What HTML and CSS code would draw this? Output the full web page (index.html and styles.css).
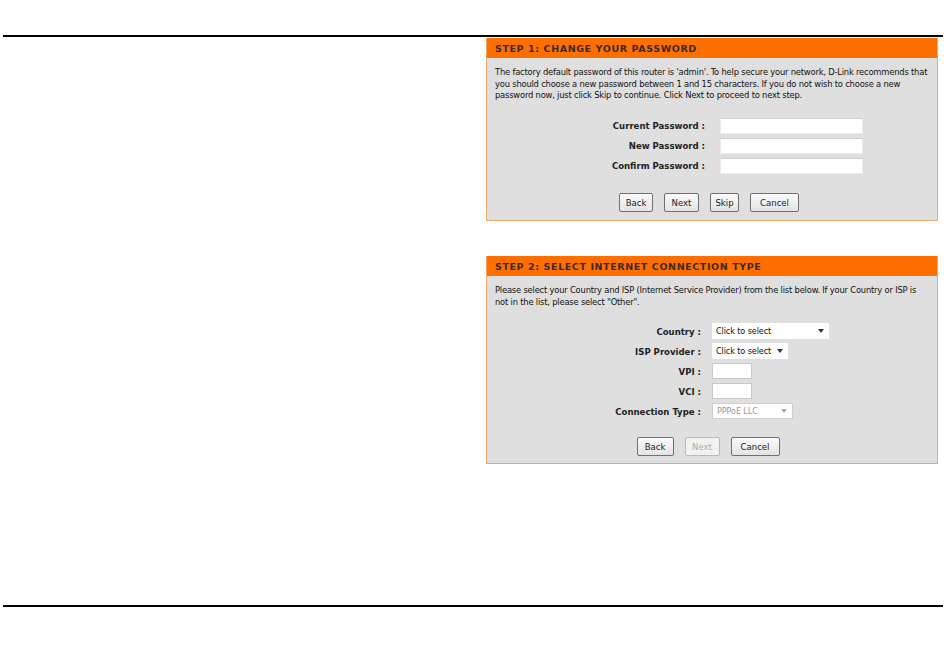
FILE: index.html
```html
<!DOCTYPE html>
<html lang="en">
<head>
  <meta charset="UTF-8">
  <title>Setup Wizard</title>
  <link rel="stylesheet" href="styles.css">
</head>
<body>

<div class="rule top-rule"></div>

<div class="content">
  <div class="panel step1">
    <div class="panel-title">STEP 1: CHANGE YOUR PASSWORD</div>
    <p class="intro">The factory default password of this router is 'admin'. To help secure your network, D-Link recommends that you should choose a new password between 1 and 15 characters. If you do not wish to choose a new password now, just click Skip to continue. Click Next to proceed to next step.</p>

    <div class="form pw-form">
      <label>Current Password :</label>
      <input type="password" class="text-box wide">
      <label>New Password :</label>
      <input type="password" class="text-box wide">
      <label>Confirm Password :</label>
      <input type="password" class="text-box wide">
    </div>

    <div class="buttons">
      <button class="btn w-back">Back</button>
      <button class="btn w-next">Next</button>
      <button class="btn w-skip">Skip</button>
      <button class="btn w-cancel">Cancel</button>
    </div>
  </div>

  <div class="panel step2">
    <div class="panel-title">STEP 2: SELECT INTERNET CONNECTION TYPE</div>
    <p class="intro">Please select your Country and ISP (Internet Service Provider) from the list below. If your Country or ISP is not in the list, please select "Other".</p>

    <div class="form isp-form">
      <label>Country :</label>
      <div class="select country"><span>Click to select</span><i class="arrow"></i></div>
      <label>ISP Provider :</label>
      <div class="select isp"><span>Click to select</span><i class="arrow"></i></div>
      <label>VPI :</label>
      <input type="text" class="text-box small">
      <label>VCI :</label>
      <input type="text" class="text-box small">
      <label>Connection Type :</label>
      <div class="select conn disabled"><span>PPPoE LLC</span><i class="arrow"></i></div>
    </div>

    <div class="buttons">
      <button class="btn w-back2">Back</button>
      <button class="btn w-next" disabled>Next</button>
      <button class="btn w-cancel">Cancel</button>
    </div>
  </div>
</div>

<div class="rule bottom-rule"></div>

</body>
</html>
```

FILE: styles.css
```css
body {
  margin: 0;
  padding: 0;
  background-color: #fff;
  font-family: 'DejaVu Sans', sans-serif;
  color: #000;
}
.rule {
  height: 2px;
  background-color: #000;
  margin: 0 7px 0 3px;
}
.top-rule {
  margin-top: 35px;
}
.bottom-rule {
  margin-top: 141px;
}
.content {
  padding-left: 486px;
  padding-top: 1px;
}
.panel {
  width: 450px;
  background-color: #dfdfdf;
  border: 1px solid #f0a868;
  border-top: none;
}
.step1 {
  height: 182px;
}
.step2 {
  height: 207px;
  margin-top: 35px;
}
.panel-title {
  height: 20px;
  line-height: 21px;
  background-color: #ff6f00;
  padding-left: 8px;
  font-size: 9.5px;
  font-weight: bold;
  letter-spacing: 0.6px;
  color: #3a2a20;
}
.intro {
  margin: 8px 8px 0 8px;
  font-family: 'DejaVu Sans Condensed', 'DejaVu Sans', sans-serif;
  font-size: 9.3px;
  line-height: 11.5px;
  letter-spacing: -0.2px;
  color: #111;
}
.form {
  display: grid;
  align-items: center;
  row-gap: 4px;
}
.form label {
  text-align: right;
  font-family: 'DejaVu Sans Condensed', 'DejaVu Sans', sans-serif;
  font-size: 9.5px;
  font-weight: bold;
  color: #222;
}
.pw-form {
  grid-template-columns: 218px 143px;
  column-gap: 15px;
  margin-top: 17px;
}
.isp-form {
  grid-template-columns: 214px 120px;
  column-gap: 11px;
  margin-top: 16px;
}
.text-box {
  box-sizing: border-box;
  height: 16px;
  border: 1px solid #ececec;
  border-top-color: #d0d0d0;
  background-color: #fff;
  padding: 0;
  margin: 0;
}
.text-box.wide {
  width: 143px;
}
.text-box.small {
  width: 40px;
  border: 1px solid #c9c9c9;
}
.select {
  box-sizing: border-box;
  height: 16px;
  display: flex;
  align-items: center;
  justify-content: space-between;
  background-color: #fff;
  padding: 0 5px 0 4px;
  font-family: 'DejaVu Sans Condensed', 'DejaVu Sans', sans-serif;
  font-size: 9px;
  letter-spacing: -0.1px;
  color: #111;
}
.select .arrow {
  width: 0;
  height: 0;
  border-left: 3px solid transparent;
  border-right: 3px solid transparent;
  border-top: 4px solid #333;
}
.select.country {
  width: 117px;
}
.select.isp {
  width: 76px;
}
.select.conn {
  width: 81px;
  border: 1px solid #cfcfcf;
}
.select.disabled {
  color: #999;
}
.select.disabled .arrow {
  border-top-color: #aaa;
}
.buttons {
  display: flex;
  justify-content: center;
  gap: 11px;
  margin-top: 19px;
  padding-right: 6px;
}
.step2 .buttons {
  margin-top: 18px;
  padding-right: 8px;
}
.btn {
  height: 19px;
  padding: 0;
  font-family: 'DejaVu Sans Condensed', 'DejaVu Sans', sans-serif;
  font-size: 9.5px;
  color: #222;
  background: linear-gradient(#fbfbfb, #e4e4e4);
  border: 1px solid #6f6f6f;
  border-radius: 2px;
}
.btn:disabled {
  color: #aaa;
  border-color: #b8b8b8;
  background: #f2f2f2;
}
.w-back {
  width: 34px;
}
.w-back2 {
  width: 37px;
}
.w-next {
  width: 35px;
}
.w-skip {
  width: 29px;
}
.w-cancel {
  width: 49px;
}
```
